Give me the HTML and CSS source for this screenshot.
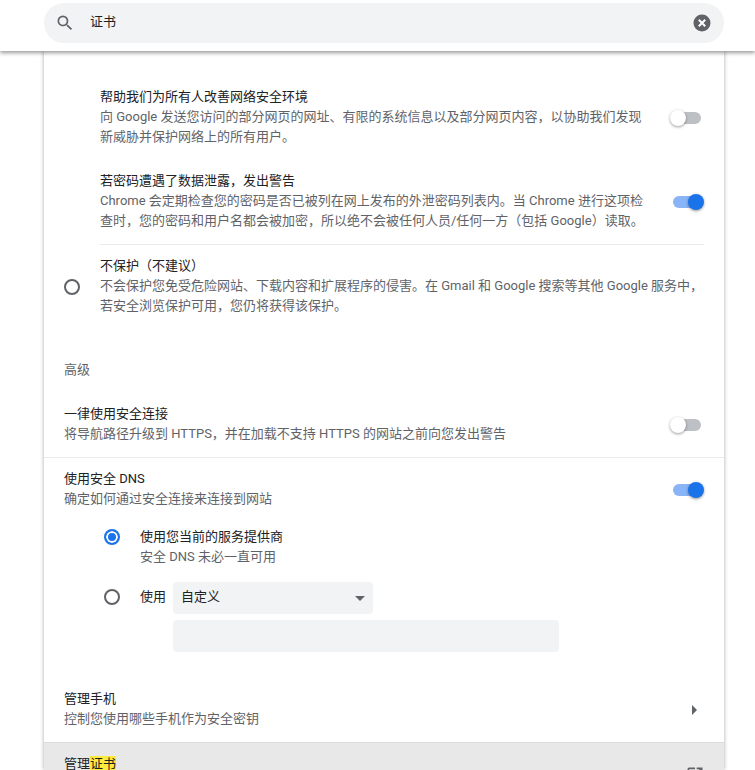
FILE: index.html
```html
<!DOCTYPE html>
<html lang="zh-CN">
<head>
    <meta charset="UTF-8">
    <title>设置</title>
    <link rel="stylesheet" href="styles.css">
</head>
<body>

    <header class="toolbar">
        <div class="search">
            <svg class="search-icon" viewBox="0 0 24 24" width="20" height="20">
                <path d="M15.5 14h-.79l-.28-.27A6.471 6.471 0 0 0 16 9.5 6.5 6.5 0 1 0 9.5 16c1.61 0 3.09-.59 4.23-1.57l.27.28v.79l5 4.99L20.49 19l-4.99-5zm-6 0C7.01 14 5 11.99 5 9.5S7.01 5 9.5 5 14 7.01 14 9.5 11.99 14 9.5 14z"/>
            </svg>
            <span class="search-text">证书</span>
            <svg class="clear-icon" viewBox="0 0 18 18" width="18" height="18">
                <circle cx="9" cy="9" r="8.5" fill="#5f6368"/>
                <path d="M5.8 5.8l6.4 6.4M12.2 5.8l-6.4 6.4" stroke="#fff" stroke-width="2" fill="none"/>
            </svg>
        </div>
    </header>

    <main class="card">
        <div class="row nested first">
            <div class="text">
                <div class="title">帮助我们为所有人改善网络安全环境</div>
                <div class="sub">向 Google 发送您访问的部分网页的网址、有限的系统信息以及部分网页内容，以协助我们发现<br>新威胁并保护网络上的所有用户。</div>
            </div>
            <div class="toggle"></div>
        </div>

        <div class="row nested second">
            <div class="text">
                <div class="title">若密码遭遇了数据泄露，发出警告</div>
                <div class="sub">Chrome 会定期检查您的密码是否已被列在网上发布的外泄密码列表内。当 Chrome 进行这项检<br>查时，您的密码和用户名都会被加密，所以绝不会被任何人员/任何一方（包括 Google）读取。</div>
            </div>
            <div class="toggle on"></div>
        </div>

        <div class="no-protect">
            <div class="radio"></div>
            <div class="text">
                <div class="title">不保护（不建议）</div>
                <div class="sub">不会保护您免受危险网站、下载内容和扩展程序的侵害。在 Gmail 和 Google 搜索等其他 Google 服务中，<br>若安全浏览保护可用，您仍将获得该保护。</div>
            </div>
        </div>

        <h2 class="section">高级</h2>

        <div class="row https">
            <div class="text">
                <div class="title">一律使用安全连接</div>
                <div class="sub">将导航路径升级到 HTTPS，并在加载不支持 HTTPS 的网站之前向您发出警告</div>
            </div>
            <div class="toggle"></div>
        </div>

        <div class="row dns">
            <div class="text">
                <div class="title">使用安全 DNS</div>
                <div class="sub">确定如何通过安全连接来连接到网站</div>
            </div>
            <div class="toggle on"></div>
        </div>

        <div class="dns-option">
            <div class="radio checked"></div>
            <div class="text">
                <div class="title">使用您当前的服务提供商</div>
                <div class="sub">安全 DNS 未必一直可用</div>
            </div>
        </div>

        <div class="dns-custom">
            <div class="radio"></div>
            <span class="title">使用</span>
            <div class="custom-fields">
                <div class="select">自定义<span class="caret"></span></div>
                <div class="input"></div>
            </div>
        </div>

        <div class="row phones">
            <div class="text">
                <div class="title">管理手机</div>
                <div class="sub">控制您使用哪些手机作为安全密钥</div>
            </div>
            <span class="arrow"></span>
        </div>

        <div class="row certs">
            <div class="title">管理<mark>证书</mark></div>
            <svg class="external" viewBox="0 0 24 24" width="20" height="20">
                <path d="M19 19H5V5h7V3H5a2 2 0 0 0-2 2v14a2 2 0 0 0 2 2h14c1.1 0 2-.9 2-2v-7h-2v7zM14 3v2h3.59l-9.83 9.83 1.41 1.41L19 6.41V10h2V3h-7z"/>
            </svg>
        </div>
    </main>

</body>
</html>
```

FILE: styles.css
```css
html, body {
    height: 770px;
    overflow: hidden;
}
body {
    font-family: Roboto, "Noto Sans CJK SC", sans-serif;
    font-size: 13px;
    line-height: 20px;
    color: #202124;
    background-color: #fff;
    margin: 0;
}
.toolbar {
    position: relative;
    z-index: 1;
    height: 51px;
    padding: 3px 31px 0 44px;
    box-sizing: border-box;
    background-color: #fff;
    box-shadow: 0 2px 4px rgba(0,0,0,0.4);
}
.search {
    height: 40px;
    border-radius: 20px;
    background-color: #f1f3f4;
    display: flex;
    align-items: center;
    padding: 0 13px 0 11px;
}
.search-icon {
    fill: #5f6368;
}
.search-text {
    flex: 1;
    margin-left: 15px;
    margin-top: -2px;
}
.card {
    width: 680px;
    margin-left: 44px;
    height: 719px;
    box-sizing: border-box;
    padding-top: 36px;
    background-color: #fff;
    box-shadow: 0 0 4px rgba(0,0,0,0.35);
}
.row {
    display: flex;
    justify-content: space-between;
    align-items: center;
    padding: 0 20px;
}
.sub {
    color: #5f6368;
    white-space: nowrap;
}
.nested {
    padding-left: 56px;
}
.second {
    margin-top: 24px;
}
.toggle {
    position: relative;
    flex: none;
    width: 34px;
    height: 16px;
    margin-top: 2px;
}
.toggle::before {
    content: "";
    position: absolute;
    left: 3px;
    top: 2px;
    width: 28px;
    height: 12px;
    border-radius: 6px;
    background-color: #bdc1c6;
}
.toggle::after {
    content: "";
    position: absolute;
    left: 0;
    top: 0;
    width: 16px;
    height: 16px;
    border-radius: 50%;
    background-color: #fff;
    box-shadow: 0 1px 3px rgba(0,0,0,0.4);
}
.toggle.on::before {
    background-color: #8ab4f8;
}
.toggle.on::after {
    left: 18px;
    background-color: #1a73e8;
}
.first .toggle {
    margin-bottom: 2px;
    align-self: flex-start;
    margin-top: 23px;
}
.second .toggle {
    align-self: center;
}
.no-protect {
    display: flex;
    align-items: center;
    margin: 13px 20px 0 56px;
    padding-top: 11px;
    border-top: 1px solid #e8eaed;
    position: relative;
}
.no-protect .radio {
    position: absolute;
    left: -36px;
    top: 34px;
}
.radio {
    flex: none;
    width: 16px;
    height: 16px;
    box-sizing: border-box;
    border: 2px solid #5f6368;
    border-radius: 50%;
}
.radio.checked {
    border-color: #1a73e8;
    background-color: #1a73e8;
    box-shadow: inset 0 0 0 2px #fff;
}
.section {
    margin: 44px 0 0;
    padding-left: 20px;
    font-size: 13px;
    font-weight: 400;
    line-height: 20px;
    color: #5f6368;
}
.https {
    margin-top: 24px;
    padding-bottom: 13px;
    border-bottom: 1px solid #e8eaed;
}
.dns {
    padding-top: 11px;
}
.dns-option {
    display: flex;
    align-items: flex-start;
    margin: 18px 0 0 60px;
}
.dns-option .radio {
    margin-top: 2px;
}
.dns-option .radio,
.dns-custom .radio {
    margin-right: 20px;
}
.dns-custom {
    display: flex;
    margin: 15px 0 0 60px;
}
.dns-custom .radio {
    margin-top: 7px;
}
.dns-custom .title {
    line-height: 30px;
    margin-right: 7px;
}
.select {
    position: relative;
    width: 200px;
    height: 32px;
    box-sizing: border-box;
    padding: 0 8px;
    line-height: 30px;
    border-radius: 4px;
    background-color: #f1f3f4;
}
.caret {
    position: absolute;
    right: 8px;
    top: 14px;
    border-left: 5px solid transparent;
    border-right: 5px solid transparent;
    border-top: 5px solid #5f6368;
}
.input {
    width: 386px;
    height: 32px;
    margin-top: 6px;
    border-radius: 4px;
    background-color: #f1f3f4;
}
.phones {
    margin-top: 37px;
    padding-bottom: 13px;
}
.arrow {
    margin: 2px 7px 0 0;
    border-top: 5px solid transparent;
    border-bottom: 5px solid transparent;
    border-left: 5px solid #5f6368;
}
.certs {
    border-top: 1px solid #dadce0;
    background-color: #e8e8e8;
    height: 44px;
    align-items: flex-start;
    padding-top: 11px;
}
.external {
    fill: #5f6368;
    margin: 11px -1px 0 0;
}
mark {
    background-color: #ffeb3b;
    color: inherit;
}
```
